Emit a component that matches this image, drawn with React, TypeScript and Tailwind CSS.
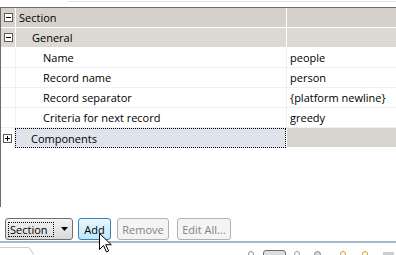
import React from 'react';

type Row = {
  label: string;
  value?: string;
  indent: number;
  kind: 'section' | 'group' | 'prop' | 'selected';
  expander?: 'minus' | 'plus';
};

const rows: Row[] = [
  { label: 'Section', indent: 18, kind: 'section', expander: 'minus' },
  { label: 'General', indent: 31, kind: 'group', expander: 'minus' },
  { label: 'Name', value: 'people', indent: 42, kind: 'prop' },
  { label: 'Record name', value: 'person', indent: 42, kind: 'prop' },
  { label: 'Record separator', value: '{platform newline}', indent: 42, kind: 'prop' },
  { label: 'Criteria for next record', value: 'greedy', indent: 42, kind: 'prop' },
  { label: 'Components', indent: 31, kind: 'selected', expander: 'plus' },
];

const Expander = ({ type }: { type: 'minus' | 'plus' }) => (
  <svg width="9" height="9" viewBox="0 0 9 9" className="block">
    <rect x="0.5" y="0.5" width="8" height="8" fill="#fff" stroke="#5a5a5a" />
    <line x1="2" y1="4.5" x2="7" y2="4.5" stroke="#000" />
    {type === 'plus' && <line x1="4.5" y1="2" x2="4.5" y2="7" stroke="#000" />}
  </svg>
);

const TreeRow = ({ row }: { row: Row }) => {
  const shaded = row.kind === 'section' || row.kind === 'group';
  const bg = row.kind === 'section' ? 'bg-[#d5d1ca]' : row.kind === 'group' ? 'bg-[#dcd9d3]' : 'bg-white';
  const sep = shaded ? 'border-white' : 'border-[#f0f0f0]';

  if (row.kind === 'selected') {
    return (
      <div className="flex h-[20px]">
        <div className="w-[14px] shrink-0 flex items-center justify-center border-r border-[#f0f0f0] bg-white">
          <Expander type="plus" />
        </div>
        <div className="w-[271px] shrink-0 border border-dotted border-black bg-[#dee3ec] flex items-center pl-[15px]">
          {row.label}
        </div>
        <div className="flex-1 bg-[#d8d5cf] ml-px border-b border-white" />
      </div>
    );
  }

  return (
    <div className={`flex h-[20px] border-b ${sep} ${bg}`}>
      <div className={`w-[15px] shrink-0 flex items-center justify-center border-r ${sep}`}>
        {row.expander && <Expander type={row.expander} />}
      </div>
      <div className={`w-[271px] shrink-0 flex items-center border-r ${sep}`} style={{ paddingLeft: row.indent - 15 }}>
        {row.label}
      </div>
      <div className="flex-1 flex items-center pl-[3px]">{row.value}</div>
    </div>
  );
};

export default function App() {
  return (
    <div className="relative w-[396px] h-[255px] bg-white overflow-hidden text-[11px] text-black font-['Open_Sans','Liberation_Sans',sans-serif] leading-none">
      {/* strip above the tree */}
      <div className="h-[7px] pt-px">
        <div className="ml-[68px] h-px bg-[#e2e2e2]" />
      </div>

      {/* property tree */}
      <div className="h-[200px] border-t border-l border-[#6d6d6d]">
        {rows.map((r) => (
          <TreeRow key={r.label} row={r} />
        ))}
      </div>

      {/* buttons */}
      <div className="flex mt-[11px] h-[22px]">
        <div className="ml-[5px] w-[68px] rounded-[3px] border border-[#707070] bg-gradient-to-b from-[#f2f2f2] to-[#dadada] flex items-center">
          <div className="ml-[2px] w-[46px] h-[15px] border border-dotted border-black flex items-center pl-[1px]">Section</div>
          <svg width="7" height="4" viewBox="0 0 7 4" className="ml-[7px]">
            <path d="M0 0h7L3.5 4z" fill="#000" />
          </svg>
        </div>
        <div className="ml-[5px] w-[33px] rounded-[3px] border border-[#3c7fb1] bg-gradient-to-b from-[#eaf6fd] to-[#bee6fd] flex items-center justify-center">
          Add
        </div>
        <div className="ml-[6px] w-[52px] rounded-[3px] border border-[#adb2b5] bg-[#f4f4f4] text-[#838383] flex items-center justify-center">
          Remove
        </div>
        <div className="ml-[8px] w-[54px] rounded-[3px] border border-[#adb2b5] bg-[#f4f4f4] text-[#838383] flex items-center justify-center">
          Edit All...
        </div>
      </div>

      {/* divider + partial toolbar */}
      <div className="mt-px h-[2px] bg-[#a5b8cb]" />
      <div className="relative h-[13px] bg-white">
        <div className="absolute left-0 top-[4px] w-[28px] h-px bg-[#cfcfcf]" />
        <div className="absolute left-[28px] top-[4px] w-px h-[9px] bg-[#cfcfcf] rotate-[-35deg] origin-top" />
        <div className="absolute left-[248px] top-[8px] w-[6px] h-[6px] rounded-full border border-[#8a8a8a]" />
        <div className="absolute left-[263px] top-[7px] w-[23px] h-[8px] rounded-t-[3px] border border-[#6d6d6d] bg-[#dedede]" />
        <div className="absolute left-[294px] top-[8px] w-[6px] h-[6px] rounded-full border border-[#9a9a9a]" />
        <div className="absolute left-[314px] top-[8px] w-[7px] h-[6px] rounded-t-full border border-[#8a8a8a] bg-[#d8d8d8]" />
        <div className="absolute left-[340px] top-[8px] w-[6px] h-[6px] rounded-full border border-[#d69a2a]" />
        <div className="absolute left-[362px] top-[8px] w-[6px] h-[6px] rounded-full border border-[#d69a2a]" />
        <div className="absolute left-[383px] top-[9px] w-[11px] h-[4px] bg-[#c9ced6]" />
      </div>

      {/* mouse pointer */}
      <svg width="13" height="20" viewBox="0 0 13 20" className="absolute left-[99px] top-[233px]">
        <path d="M0.5 0.5v16l4-4 3 6.5 2.2-1-3-6.3h5.6z" fill="#fff" stroke="#000" strokeLinejoin="round" />
      </svg>
    </div>
  );
}
